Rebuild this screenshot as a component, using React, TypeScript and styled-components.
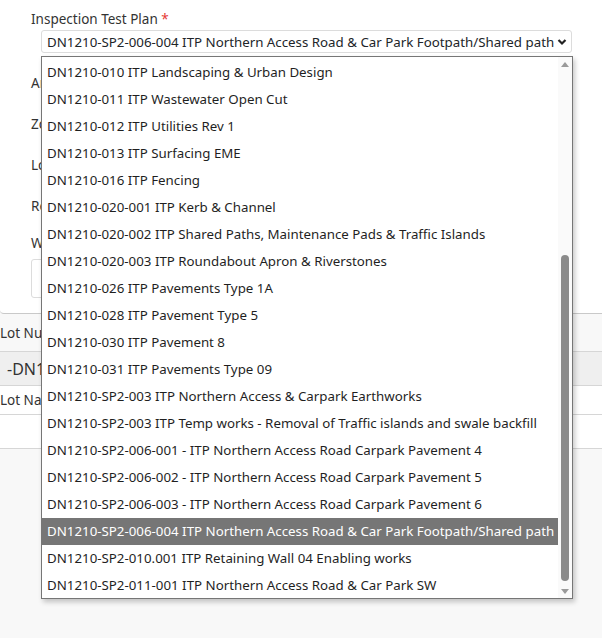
import * as React from "react";
import styled, { createGlobalStyle } from "styled-components";

const GlobalStyle = createGlobalStyle`
  html, body {
    margin: 0;
    padding: 0;
    background: #f8f8f8;
    font-family: "Noto Sans", "Open Sans", sans-serif;
    color: #212529;
  }
`;

const ITEMS = [
  "DN1210-010 ITP Landscaping & Urban Design",
  "DN1210-011 ITP Wastewater Open Cut",
  "DN1210-012 ITP Utilities Rev 1",
  "DN1210-013 ITP Surfacing EME",
  "DN1210-016 ITP Fencing",
  "DN1210-020-001 ITP Kerb & Channel",
  "DN1210-020-002 ITP Shared Paths, Maintenance Pads & Traffic Islands",
  "DN1210-020-003 ITP Roundabout Apron & Riverstones",
  "DN1210-026 ITP Pavements Type 1A",
  "DN1210-028 ITP Pavement Type 5",
  "DN1210-030 ITP Pavement 8",
  "DN1210-031 ITP Pavements Type 09",
  "DN1210-SP2-003 ITP Northern Access & Carpark Earthworks",
  "DN1210-SP2-003 ITP Temp works - Removal of Traffic islands and swale backfill",
  "DN1210-SP2-006-001 - ITP Northern Access Road Carpark Pavement 4",
  "DN1210-SP2-006-002 - ITP Northern Access Road Carpark Pavement 5",
  "DN1210-SP2-006-003 - ITP Northern Access Road Carpark Pavement 6",
  "DN1210-SP2-006-004 ITP Northern Access Road & Car Park Footpath/Shared path",
  "DN1210-SP2-010.001 ITP Retaining Wall 04 Enabling works",
  "DN1210-SP2-011-001 ITP Northern Access Road & Car Park SW",
];

const SELECTED = "DN1210-SP2-006-004 ITP Northern Access Road & Car Park Footpath/Shared path";

const Page = styled.div`
  position: relative;
  width: 602px;
  height: 638px;
  overflow: hidden;
`;

const Card = styled.div`
  background: #fff;
  border-bottom: 1px solid #c9c9c9;
  border-bottom-left-radius: 4px;
  height: 314px;
  box-sizing: border-box;
  padding: 9px 0 0 31px;
`;

const Label = styled.div`
  font-size: 13.5px;
  line-height: 20px;
  color: #333;
  margin-bottom: 1px;
`;

const Req = styled.span`
  color: #e53935;
`;

const FieldLabel = styled(Label)<{ $gap: number }>`
  margin-top: ${(p) => p.$gap}px;
`;

const SelectBox = styled.div`
  margin-left: 10px;
  width: 531px;
  height: 23px;
  box-sizing: border-box;
  border: 1px solid #dcdcdc;
  border-radius: 3px;
  display: flex;
  align-items: center;
  justify-content: space-between;
  padding: 0 4px 0 5px;
  font-size: 13.3px;
  color: #212529;
  white-space: nowrap;
`;

const TextArea = styled.div`
  margin-top: 6px;
  width: 540px;
  height: 39px;
  box-sizing: border-box;
  border: 1px solid #dcdcdc;
  border-radius: 3px;
`;

const Table = styled.div`
  font-size: 13.5px;
`;

const Row = styled.div<{ $bg: string; $h: number; $pad: number; $size?: number }>`
  background: ${(p) => p.$bg};
  height: ${(p) => p.$h}px;
  border-bottom: 1px solid #d6d6d6;
  display: flex;
  align-items: center;
  padding-left: ${(p) => p.$pad}px;
  font-size: ${(p) => p.$size || 13.5}px;
  color: #333;
  white-space: nowrap;
`;

const List = styled.div`
  position: absolute;
  left: 41px;
  top: 56px;
  width: 532px;
  height: 543px;
  box-sizing: border-box;
  border: 1px solid #767676;
  background: #fff;
  box-shadow: 2px 3px 5px rgba(0, 0, 0, 0.22);
  display: flex;
`;

const Options = styled.div`
  flex: 1;
  padding-top: 2px;
  overflow: hidden;
`;

const Option = styled.div<{ $active?: boolean }>`
  height: 27px;
  line-height: 27px;
  padding-left: 5px;
  font-size: 13.3px;
  white-space: nowrap;
  color: ${(p) => (p.$active ? "#fff" : "#1f1f1f")};
  background: ${(p) => (p.$active ? "#767676" : "transparent")};
`;

const ScrollBar = styled.div`
  width: 14px;
  background: #fafafa;
  display: flex;
  flex-direction: column;
  align-items: center;
`;

const Arrow = styled.div`
  height: 14px;
  display: flex;
  align-items: center;
  justify-content: center;
`;

const Track = styled.div`
  flex: 1;
  width: 100%;
  display: flex;
  flex-direction: column;
  align-items: center;
  padding-top: 184px;
  padding-bottom: 3px;
  box-sizing: border-box;
`;

const Thumb = styled.div`
  flex: 1;
  width: 8px;
  border-radius: 4px;
  background: #8b8b8b;
`;

const Chevron = () => (
  <svg width="10" height="8" viewBox="0 0 10 8">
    <path d="M1.5 2 L5 5.5 L8.5 2" fill="none" stroke="#222" strokeWidth="2.2" />
  </svg>
);

const Tri = ({ up }: { up?: boolean }) => (
  <svg width="8" height="5" viewBox="0 0 8 5">
    <path d={up ? "M0 5 L4 0 L8 5 Z" : "M0 0 L4 5 L8 0 Z"} fill="#9a9a9a" />
  </svg>
);

export default function App() {
  return (
    <Page>
      <GlobalStyle />
      <Card>
        <Label>
          Inspection Test Plan <Req>*</Req>
        </Label>
        <SelectBox>
          <span>{SELECTED}</span>
          <Chevron />
        </SelectBox>
        <FieldLabel $gap={20}>Area</FieldLabel>
        <FieldLabel $gap={21}>Zone</FieldLabel>
        <FieldLabel $gap={21}>Location</FieldLabel>
        <FieldLabel $gap={21}>Reference</FieldLabel>
        <FieldLabel $gap={17}>Work Description</FieldLabel>
        <TextArea />
      </Card>
      <Table>
        <Row $bg="#f8f8f8" $h={37} $pad={0}>Lot Number</Row>
        <Row $bg="#efefef" $h={33} $pad={7} $size={16}>-DN1210-SP2-006-004</Row>
        <Row $bg="#fff" $h={28} $pad={0}>Lot Name</Row>
        <Row $bg="#fff" $h={33} $pad={0} />
      </Table>
      <List>
        <Options>
          {ITEMS.map((it) => (
            <Option key={it} $active={it === SELECTED}>
              {it}
            </Option>
          ))}
        </Options>
        <ScrollBar>
          <Arrow>
            <Tri up />
          </Arrow>
          <Track>
            <Thumb />
          </Track>
          <Arrow>
            <Tri />
          </Arrow>
        </ScrollBar>
      </List>
    </Page>
  );
}
